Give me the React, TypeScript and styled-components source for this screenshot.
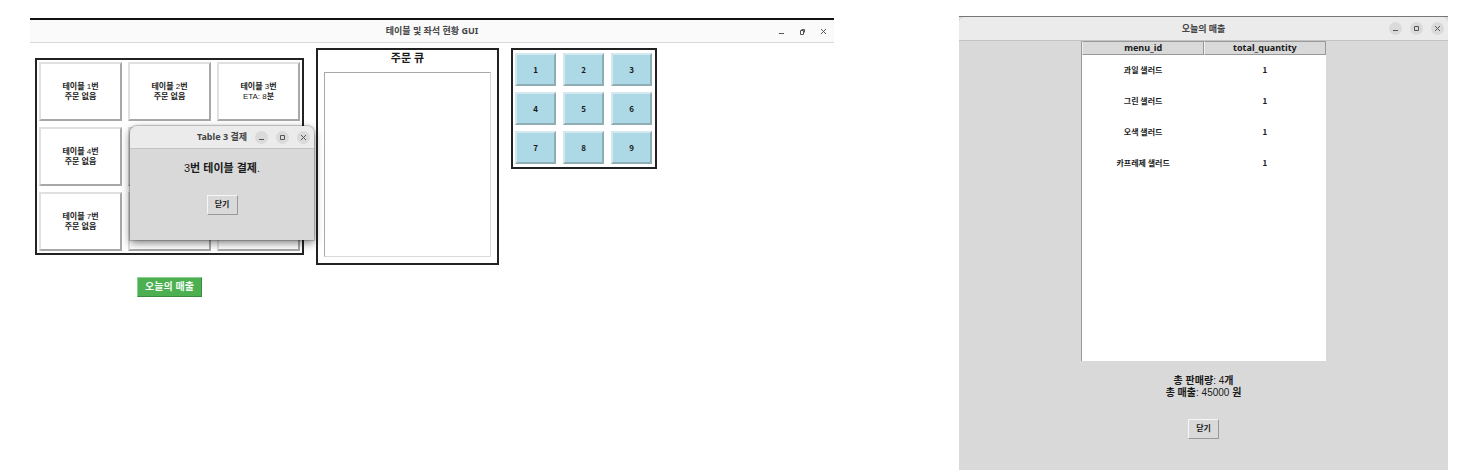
import React from "react";
import styled, { createGlobalStyle, css } from "styled-components";

const uiFont = `"Liberation Sans", "Noto Sans CJK KR", sans-serif`;
const titleFont = `"Noto Sans", "Noto Sans CJK KR", sans-serif`;
const cjkFont = `"Noto Sans CJK KR", sans-serif`;

const GlobalStyle = createGlobalStyle`
  *, *::before, *::after { box-sizing: border-box; }
  body {
    margin: 0;
    background: #fff;
    color: #1a1a1a;
    font-family: ${uiFont};
    font-size: 8px;
    line-height: 10px;
  }
  button { font: inherit; color: inherit; border-radius: 0; margin: 0; padding: 0; }
  h1, h2, p, ul { margin: 0; padding: 0; font-weight: 400; }
`;

const Desktop = styled.main`
  display: grid;
  grid-template-columns: 804fr 489fr;
  column-gap: 125px;
  min-height: 100vh;
  padding: 16px 21px 0 30px;
  overflow: hidden;
`;

const MainWindow = styled.section`
  position: relative;
  margin-top: 2px;
  border-top: 2px solid #111;
`;

const SalesWindow = styled.section`
  display: flex;
  flex-direction: column;
  align-items: center;
  border-top: 1px solid #777;
  background: #d9d9d9;
`;

const TitleBar = styled.header<{ $tone: "light" | "grey" }>`
  display: grid;
  grid-template-columns: 1fr auto 1fr;
  align-items: center;
  width: 100%;
  height: ${(p) => (p.$tone === "light" ? 23 : 24)}px;
  border-bottom: 1px solid ${(p) => (p.$tone === "light" ? "#dadada" : "#c4c4c4")};
  border-radius: ${(p) => (p.$tone === "light" ? "0" : "6px 6px 0 0")};
  background: ${(p) => (p.$tone === "light" ? "#fafafa" : "#ebebeb")};
`;

const Title = styled.h1`
  grid-column: 2;
  color: #444;
  font-family: ${titleFont};
  font-size: 9px;
  font-weight: 700;
  line-height: 14px;
  white-space: nowrap;
`;

const Controls = styled.div`
  display: flex;
  justify-content: flex-end;
  gap: 8px;
  padding-right: 4px;
`;

const ControlButton = styled.button<{ $round: boolean }>`
  display: grid;
  place-items: center;
  width: 13px;
  height: 13px;
  border: 0;
  border-radius: 50%;
  background: ${(p) => (p.$round ? "#dadada" : "transparent")};
  color: #555;
`;

const Workspace = styled.div`
  display: flex;
  align-items: flex-start;
  gap: 12px;
  padding: 5px;
`;

const TableColumn = styled.div`
  display: flex;
  flex-direction: column;
  align-items: center;
  gap: 22px;
  padding-top: 10px;
`;

const frame = css`
  border: 2px solid #222;
  background: #fff;
`;

const TableGrid = styled.div`
  ${frame}
  display: grid;
  grid-template-columns: repeat(3, 83px);
  grid-auto-rows: 59px;
  gap: 6px;
  padding: 2px;
`;

const TableButton = styled.button`
  border: 2px solid;
  border-color: #e0e0e0 #a8a8a8 #a8a8a8 #e0e0e0;
  background: #fff;
`;

const Line = styled.span`
  display: block;
`;

const Hangul = styled.span`
  font-weight: 700;
`;

const SalesButton = styled.button`
  width: 65px;
  height: 20px;
  border: 1px solid;
  border-color: #8fd093 #3b8b3e #3b8b3e #8fd093;
  background: #4caf50;
  color: #f4fbf4;
  font-size: 10px;
  font-weight: 700;
  line-height: 16px;
`;

const Queue = styled.section`
  ${frame}
  display: flex;
  flex-direction: column;
  width: 183px;
  height: 217px;
  padding: 0 6px 6px;
`;

const QueueTitle = styled.h2`
  height: 22px;
  font-size: 11px;
  font-weight: 700;
  line-height: 17px;
  text-align: center;
`;

const QueueList = styled.ul`
  flex: 1;
  border: 1px solid;
  border-color: #a8a8a8 #d9d9d9 #d9d9d9 #a8a8a8;
  list-style: none;
`;

const Keypad = styled.div`
  ${frame}
  display: grid;
  grid-template-columns: repeat(3, 41px);
  grid-auto-rows: 33px;
  gap: 6px 7px;
  padding: 3px 3px 3px 2px;
`;

const Key = styled.button`
  border: 2px solid;
  border-color: #d3e9ef #8fadb5 #8fadb5 #d3e9ef;
  background: #add8e6;
  font-family: ${cjkFont};
  font-weight: 700;
`;

const Dialog = styled.section`
  position: absolute;
  z-index: 2;
  top: 106px;
  left: 100px;
  display: flex;
  flex-direction: column;
  align-items: center;
  width: 184px;
  height: 114px;
  overflow: hidden;
  border-radius: 7px 7px 0 0;
  background: #d9d9d9;
  box-shadow: 0 0 1px 1px rgba(0, 0, 0, 0.2), 0 3px 9px rgba(0, 0, 0, 0.5);
`;

const DialogBar = styled.header`
  display: flex;
  align-items: center;
  justify-content: flex-end;
  gap: 8px;
  width: 100%;
  height: 23px;
  border-bottom: 1px solid #c4c4c4;
  background: #ebebeb;
`;

const Message = styled.p`
  margin: 11px 0 19px;
  font-size: 11px;
  line-height: 16px;
`;

const CloseButton = styled.button`
  width: 31px;
  height: 20px;
  border: 1px solid;
  border-color: #f6f6f6 #999 #999 #f6f6f6;
  background: #d9d9d9;
`;

const TableBox = styled.div`
  width: 50%;
  height: 320px;
  border-left: 1px solid #999;
  background: #fff;
`;

const SalesTable = styled.table`
  width: 100%;
  border-collapse: separate;
  border-spacing: 0;
  table-layout: fixed;
  text-align: center;

  th {
    height: 14px;
    padding: 0;
    border: 1px solid;
    border-color: #999 #999 #999 #eee;
    background: #d9d9d9;
    font-family: ${titleFont};
    font-size: 9px;
    font-weight: 700;
    line-height: 12px;
  }

  td {
    height: 31px;
    padding: 0 0 2px;
    font-family: ${cjkFont};
    font-weight: 700;
  }
`;

const Totals = styled.p`
  margin: 14px 0 20px;
  font-size: 10px;
  line-height: 12px;
  text-align: center;
`;

type IconKind = "min" | "max" | "restore" | "close";

const paths: Record<IconKind, string> = {
  min: "M1 5.5H6",
  max: "M1.5 1.5H5.5V5.5H1.5Z",
  restore: "M1.5 2.5H4.5V6.5H1.5ZM2.5 1.5H5.5V4.5",
  close: "M1 1L6 6M6 1L1 6",
};

const names: Record<IconKind, string> = {
  min: "최소화",
  max: "최대화",
  restore: "이전 크기로",
  close: "창 닫기",
};

function WindowControls({ round = true }: { round?: boolean }) {
  const kinds: IconKind[] = ["min", round ? "max" : "restore", "close"];
  return (
    <Controls>
      {kinds.map((kind) => (
        <ControlButton key={kind} type="button" $round={round} aria-label={names[kind]}>
          <svg width="7" height="7" viewBox="0 0 7 7" fill="none" stroke="currentColor">
            <path d={paths[kind]} />
          </svg>
        </ControlButton>
      ))}
    </Controls>
  );
}

const numbers = [1, 2, 3, 4, 5, 6, 7, 8, 9];

// Tables that sit underneath the payment dialog show no label while it is open.
const coveredTables = [5, 6, 8, 9];

const sales = [
  { menu: "과일 샐러드", quantity: 1 },
  { menu: "그린 샐러드", quantity: 1 },
  { menu: "오색 샐러드", quantity: 1 },
  { menu: "카프레제 샐러드", quantity: 1 },
];

function TableLabel({ number }: { number: number }) {
  return (
    <>
      <Line>
        <Hangul>테이블</Hangul> {number}
        <Hangul>번</Hangul>
      </Line>
      <Line>
        {number === 3 ? <>ETA: 8<Hangul>분</Hangul></> : <Hangul>주문 없음</Hangul>}
      </Line>
    </>
  );
}

export default function App() {
  return (
    <>
      <GlobalStyle />
      <Desktop>
        <MainWindow>
          <TitleBar $tone="light">
            <Title>테이블 및 좌석 현황 GUI</Title>
            <WindowControls round={false} />
          </TitleBar>
          <Workspace>
            <TableColumn>
              <TableGrid>
                {numbers.map((n) => (
                  <TableButton key={n} type="button" aria-label={`테이블 ${n}번`}>
                    {!coveredTables.includes(n) && <TableLabel number={n} />}
                  </TableButton>
                ))}
              </TableGrid>
              <SalesButton type="button">오늘의 매출</SalesButton>
            </TableColumn>
            <Queue>
              <QueueTitle>주문 큐</QueueTitle>
              <QueueList />
            </Queue>
            <Keypad>
              {numbers.map((n) => (
                <Key key={n} type="button">{n}</Key>
              ))}
            </Keypad>
          </Workspace>
          <Dialog role="dialog" aria-label="Table 3 결제">
            <DialogBar>
              <Title>Table 3 결제</Title>
              <WindowControls />
            </DialogBar>
            <Message>
              3<Hangul>번 테이블 결제</Hangul>.
            </Message>
            <CloseButton type="button"><Hangul>닫기</Hangul></CloseButton>
          </Dialog>
        </MainWindow>
        <SalesWindow>
          <TitleBar $tone="grey">
            <Title>오늘의 매출</Title>
            <WindowControls />
          </TitleBar>
          <TableBox>
            <SalesTable>
              <thead>
                <tr>
                  <th scope="col">menu_id</th>
                  <th scope="col">total_quantity</th>
                </tr>
              </thead>
              <tbody>
                {sales.map((row) => (
                  <tr key={row.menu}>
                    <td>{row.menu}</td>
                    <td>{row.quantity}</td>
                  </tr>
                ))}
              </tbody>
            </SalesTable>
          </TableBox>
          <Totals>
            <Line><Hangul>총 판매량</Hangul>: 4<Hangul>개</Hangul></Line>
            <Line><Hangul>총 매출</Hangul>: 45000 <Hangul>원</Hangul></Line>
          </Totals>
          <CloseButton type="button"><Hangul>닫기</Hangul></CloseButton>
        </SalesWindow>
      </Desktop>
    </>
  );
}
